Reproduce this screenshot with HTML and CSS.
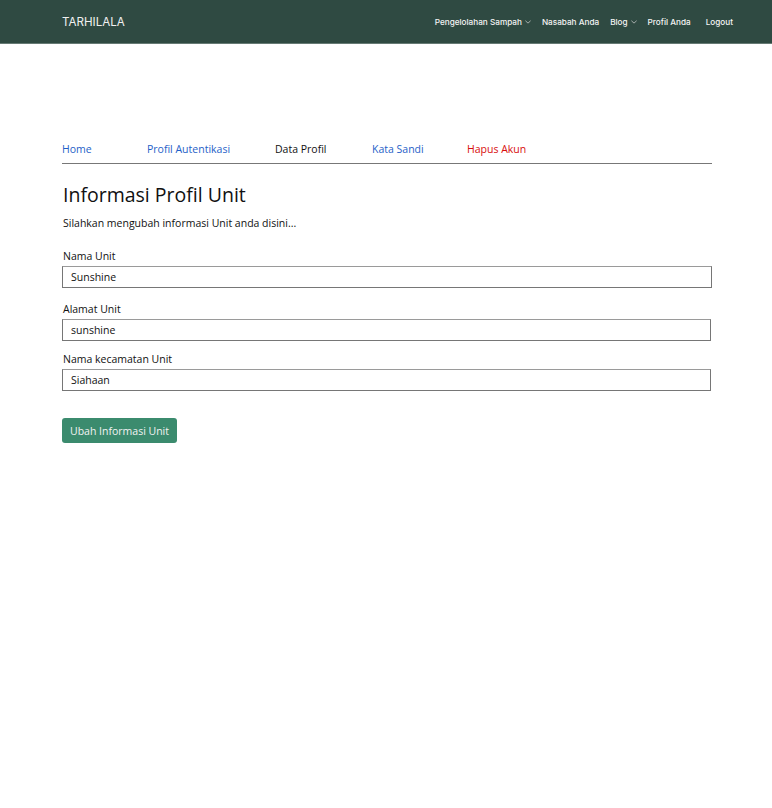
FILE: index.html
```html
<!DOCTYPE html>
<html lang="id">
<head>
<meta charset="utf-8">
<title>Tarhilala - Data Profil</title>
<link rel="stylesheet" href="styles.css">
</head>
<body>
<header class="navbar">
  <div class="nav-inner">
    <a class="brand" href="#">TARHILALA</a>
    <nav class="nav-links">
      <a href="#" class="nav-link">Pengelolahan Sampah <svg class="chev" viewBox="0 0 8 5" width="6" height="4"><path d="M0.5 0.8 L4 4 L7.5 0.8" fill="none" stroke="currentColor" stroke-width="1"/></svg></a>
      <a href="#" class="nav-link">Nasabah Anda</a>
      <a href="#" class="nav-link">Blog <svg class="chev" viewBox="0 0 8 5" width="6" height="4"><path d="M0.5 0.8 L4 4 L7.5 0.8" fill="none" stroke="currentColor" stroke-width="1"/></svg></a>
      <a href="#" class="nav-link">Profil Anda</a>
      <a href="#" class="nav-link logout">Logout</a>
    </nav>
  </div>
</header>
<main class="container">
  <ul class="tabs">
    <li class="tab t-home"><a href="#" class="link">Home</a></li>
    <li class="tab t-auth"><a href="#" class="link">Profil Autentikasi</a></li>
    <li class="tab t-data"><a href="#" class="active">Data Profil</a></li>
    <li class="tab t-sandi"><a href="#" class="link">Kata Sandi</a></li>
    <li class="tab t-hapus"><a href="#" class="danger">Hapus Akun</a></li>
  </ul>
  <section class="content">
    <h1 class="title">Informasi Profil Unit</h1>
    <p class="subtitle">Silahkan mengubah informasi Unit anda disini...</p>
    <form class="form">
      <div class="field f-first">
        <label class="label">Nama Unit</label>
        <input class="input" type="text" value="Sunshine">
      </div>
      <div class="field">
        <label class="label">Alamat Unit</label>
        <input class="input narrow" type="text" value="sunshine">
      </div>
      <div class="field">
        <label class="label">Nama kecamatan Unit</label>
        <input class="input narrow" type="text" value="Siahaan">
      </div>
      <button class="btn" type="button">Ubah Informasi Unit</button>
    </form>
  </section>
</main>
</body>
</html>
```
FILE: styles.css
```css
* { box-sizing: border-box; }
html, body { margin: 0; padding: 0; background: #fff; }
body { font-family: "Open Sans", "DejaVu Sans", sans-serif; color: #111; }
a { text-decoration: none; }

.navbar {
  background: #2f4a42;
  height: 44px;
  border-bottom: 1px solid #667a74;
}
.nav-inner {
  height: 43px;
  padding: 0 39px 0 62px;
  display: flex;
  align-items: center;
  justify-content: space-between;
}
.brand {
  font-family: Inter, sans-serif;
  font-size: 11.6px;
  color: #f0f0f0;
}
.nav-links { display: flex; align-items: center; gap: 11px; }
.nav-link {
  font-family: Inter, sans-serif;
  font-size: 8.2px;
  font-weight: 500;
  color: #f4f4f4;
  display: flex;
  align-items: center;
  gap: 3px;
}
.nav-link.logout { margin-left: 4px; }
.chev { color: #ccc; margin-top: 1px; }

.container { padding: 0 60px 0 62px; }
.tabs {
  list-style: none;
  margin: 98px 0 0;
  padding: 0 0 7px;
  display: flex;
  border-bottom: 1px solid #777;
  font-size: 10.5px;
  line-height: 14px;
}
.t-home { width: 85px; }
.t-auth { width: 128px; }
.t-data { width: 97px; }
.t-sandi { width: 95px; }
.tabs a.link { color: #1f5fc8; }
.tabs a.active { color: #111; }
.tabs a.danger { color: #d80d0d; }

.content { padding-left: 1px; }
.title {
  font-size: 19.5px;
  font-weight: 400;
  margin: 18px 0 0;
  line-height: 26px;
  color: #111;
}
.subtitle {
  font-size: 10.5px;
  margin: 8px 0 0;
  line-height: 14px;
}
.form { margin-top: 19px; }
.field { margin-bottom: 11px; }
.field.f-first { margin-bottom: 14px; }
.label {
  display: block;
  font-size: 10.5px;
  line-height: 14px;
  margin-bottom: 3px;
}
.input {
  display: block;
  width: 650px;
  margin-left: -1px;
  height: 22px;
  border: 1px solid #767676;
  border-top-color: #9a9a9a;
  padding: 0 8px;
  font-family: inherit;
  font-size: 10.5px;
  color: #111;
  background: #fff;
}
.input.narrow { width: 649px; }
.btn {
  margin-top: 16px;
  margin-left: -1px;
  background: #3b8b6e;
  color: #f2f2f2;
  border: none;
  border-radius: 3px;
  height: 25px;
  padding: 0 8px;
  font-family: inherit;
  font-size: 10.5px;
}
```
